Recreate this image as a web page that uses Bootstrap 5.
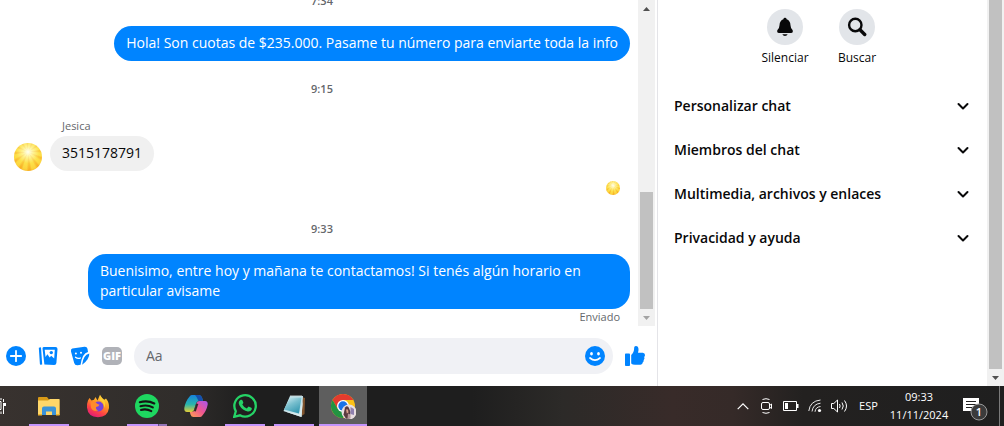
<!DOCTYPE html>
<html lang="es">
<head>
<meta charset="utf-8">
<meta name="viewport" content="width=device-width, initial-scale=1">
<title>Messenger</title>
<link href="https://cdn.jsdelivr.net/npm/bootstrap@5.3.0/dist/css/bootstrap.min.css" rel="stylesheet">
<style>
body{font-family:"Open Sans","Noto Sans",sans-serif;font-size:14px;line-height:20px;color:#080809;background:#fff}
button{background:none;border:0;padding:0;color:inherit;font:inherit}
svg{display:block;flex:none}
.side{flex:0 0 347px;border-left:1px solid #e4e4e8}
.thread{padding:0 8px 1px 14px}
.thread>*{flex-shrink:0}
.stamp{font-size:11px;font-weight:600;line-height:16px;color:#65676b;text-align:center;padding:20px 0 17px 0}
.meta{font-size:11px;line-height:16px;color:#65676b}
.sender{padding:0 12px 2px}
.bubble{border-radius:18px;padding:7px 12px 8px;max-width:88%}
.mine{background:#0084ff;color:#fff;align-self:flex-end}
.theirs{background:#f0f0f0;max-width:none}
.sun{border-radius:50%;width:28px;height:28px;background:radial-gradient(circle at 50% 32%,#fffff0 0,#fff8a8cc 22%,#fde14a99 48%,#fbc02a66 72%,#f59a1c 100%),repeating-conic-gradient(from 5deg at 50% 32%,#fde14a 0 12deg,#f7a823 18deg 22deg,#fde14a 30deg)}
.sun-sm{width:14px;height:14px;margin:10px 0 6px}
.tail{margin-right:10px}
.bar-v{width:17px;background:#f1f1f1;flex:none}
.inner{margin-right:2px}
.bar-v .arrow{height:17px;display:flex;align-items:center;justify-content:center}
.thumb{background:#c1c1c1;margin:0 2px}
.composer{gap:12px;padding:12px 12px 12px 6px;color:#0084ff}
.pill{background:#f0f1f5;border-radius:18px;height:36px;padding:0 8px 0 12px}
.pill input{background:none;border:0;outline:0;min-width:0;color:#080809}
.pill input::placeholder{color:#65676b;opacity:1}
.round{width:36px;height:36px;border-radius:50%;background:#e2e5e9}
.acts{padding:9px 3px 18px 0}
.act{width:72px;font-size:12px;line-height:16px;gap:5px}
.fold{height:44px;padding:0 18px 0 16px;font-weight:600;font-size:14px}
.taskbar{height:40px;gap:1px;color:#fff;font-size:11px;background:linear-gradient(90deg,#38322f 0,#302d2b 18%,#1e1e1e 25%,#1e1e1e 47%,#2c2a28 56%,#382b29 67%,#352a28 73%,#232120 80%,#1f1f1f 100%)}
.task{width:48px;height:40px;position:relative;display:flex;align-items:center;justify-content:center}
.cut{width:24px;justify-content:flex-start}
.open::after{content:"";position:absolute;left:4px;right:4px;bottom:0;height:2px;background:#c393fb}
.multi::after{background:linear-gradient(90deg,#c393fb 31px,#66507d 31px,#66507d 32px,#9475b8 32px)}
.active{background:#5e5e5e}
.active::after{left:0;right:0}
.tray{width:24px;display:flex;align-items:center;justify-content:center}
.lang{width:35px}
.clock{width:66px;line-height:18px;text-align:center}
.note{width:47px}
.desk{width:5px;border-left:1px solid #7a7a7a}
</style>
</head>
<body class="vh-100 d-flex flex-column overflow-hidden">
<div class="d-flex flex-grow-1 overflow-hidden">
  <main class="d-flex flex-column flex-grow-1 overflow-hidden">
    <div class="d-flex flex-grow-1 overflow-hidden">
      <section class="thread d-flex flex-column justify-content-end flex-grow-1">
        <div class="stamp">7:34</div>
        <div class="bubble mine">Hola! Son cuotas de $235.000. Pasame tu número para enviarte toda la info</div>
        <div class="stamp">9:15</div>
        <div class="d-flex align-items-end gap-2 mt-1">
          <span class="sun"></span>
          <div>
            <div class="meta sender">Jesica</div>
            <div class="bubble theirs">3515178791</div>
          </div>
        </div>
        <span class="sun sun-sm align-self-end tail"></span>
        <div class="stamp">9:33</div>
        <div class="bubble mine">Buenisimo, entre hoy y mañana te contactamos! Si tenés algún horario en particular avisame</div>
        <div class="meta text-end tail">Enviado</div>
      </section>
      <div class="bar-v inner d-flex flex-column">
        <span class="arrow"><svg width="7" height="4"><path d="M0 4 3.500 0 7 4z" fill="#505050"/></svg></span>
        <span class="flex-grow-1"></span>
        <span class="thumb" style="height:36%"></span>
        <span class="arrow"><svg width="7" height="4"><path d="M0 0 3.500 4 7 0z" fill="#a3a3a3"/></svg></span>
      </div>
    </div>
    <form class="composer d-flex align-items-center">
      <button type="button" aria-label="Más"><svg width="20" height="20"><circle cx="10" cy="10" r="10" fill="currentColor"/><path d="M10 4.800v10.400M4.800 10h10.400" stroke="#fff" stroke-width="1.800" stroke-linecap="round"/></svg></button>
      <button type="button" aria-label="Fotos"><svg width="20" height="20" fill="currentColor"><path d="M.8 1.800 3 1.300 4.200 18.500 2.500 18.800Q2 18.800 1.900 18zM5.700 1H17.500q2 .2 2 2L18.400 17q-.2 2.100-2.200 2.100L6.400 18.400 4.500 2.500Q4.400 1.200 5.700 1z"/><path d="M6.700 3.800H16.800L16.200 12.500l-3-2.700-1.500 1.700-2.300-3.200L7.500 11z" fill="#fff"/><circle cx="13.300" cy="6.600" r="1.700"/></svg></button>
      <button type="button" aria-label="Stickers"><svg width="20" height="20"><path d="M2.300 2.600 14.500.8q2.500-.2 3 2l.5 3.200q-5.800 1.200-7.400 12.800l-3 .5q-2.700.3-3.400-2.300L1 5.600Q.5 3.100 2.300 2.600z" fill="currentColor"/><path d="M19.300 7.500q.2 6-7.200 11.200Q13 9.300 19.300 7.500z" fill="currentColor"/><circle cx="5.900" cy="7.600" r="1" fill="#fff"/><circle cx="11" cy="6.800" r="1" fill="#fff"/><path d="M5.500 11.200q2.300 2 4.900.8" fill="none" stroke="#fff" stroke-width="1.300" stroke-linecap="round"/></svg></button>
      <button type="button" aria-label="GIF"><svg width="20" height="20"><rect y="1" width="20" height="18" rx="5" fill="#b0b2b8"/><text x="10" y="14" font-size="11" font-weight="800" text-anchor="middle" fill="#fff">GIF</text></svg></button>
      <div class="pill d-flex align-items-center flex-grow-1">
        <input class="flex-grow-1 p-0" type="text" placeholder="Aa" aria-label="Mensaje">
        <button type="button" aria-label="Emoji"><svg width="20" height="20"><circle cx="10" cy="10" r="10" fill="#0084ff"/><ellipse cx="6.500" cy="7.800" rx="1.400" ry="1.700" fill="#fff"/><ellipse cx="13.500" cy="7.800" rx="1.400" ry="1.700" fill="#fff"/><path d="M5 12q5 4.300 10 0" fill="none" stroke="#fff" stroke-width="1.700" stroke-linecap="round"/></svg></button>
      </div>
      <button type="button" aria-label="Me gusta"><svg width="20" height="20" fill="currentColor"><path d="M.8 7.600h3.400q.8 0 .8.800V19q0 .9-.8.900H.8Q0 19.900 0 19V8.400q0-.8.800-.8zM6.200 9q3-2.500 3-7.400Q9.200 0 10.800 0q3 0 2.700 4.300L13 6.800h4.800q2.200.2 2.200 2.200 0 1.200-.8 1.900.8 1.900-.5 3.200.2 1.800-1 2.500 0 2-2.200 2.200H10q-2.500 0-3.800-1.200z"/></svg></button>
    </form>
  </main>
  <aside class="side d-flex">
    <div class="flex-grow-1">
      <div class="acts d-flex justify-content-center">
        <button class="act d-flex flex-column align-items-center" type="button"><span class="round d-flex align-items-center justify-content-center"><svg width="20" height="20" fill="#080809"><path d="M10 .8q1.500 0 1.600 1.400 3.700 1.300 3.900 6 .1 2.600 1.700 4.300.8 1 .6 2.200-.2 1.300-1.900 1.300H4.100q-1.700 0-1.900-1.300-.2-1.200.6-2.200 1.600-1.700 1.700-4.300.2-4.700 3.900-6Q8.500.8 10 .8zM7.300 17.300h5.400q-.8 1.800-2.700 1.800t-2.700-1.800z"/></svg></span>Silenciar</button>
        <button class="act d-flex flex-column align-items-center" type="button"><span class="round d-flex align-items-center justify-content-center"><svg width="20" height="20" fill="none" stroke="#080809" stroke-linecap="round"><circle cx="8.300" cy="8" r="6.200" stroke-width="2.400"/><path d="m13 12.800 4.700 4.700" stroke-width="3.400"/></svg></span>Buscar</button>
      </div>
      <button class="fold w-100 d-flex align-items-center justify-content-between" type="button">Personalizar chat<svg width="12" height="8"><path d="m1.500 2 4.500 4.500L10.500 2" fill="none" stroke="#080809" stroke-width="2" stroke-linecap="round" stroke-linejoin="round"/></svg></button>
      <button class="fold w-100 d-flex align-items-center justify-content-between" type="button">Miembros del chat<svg width="12" height="8"><path d="m1.500 2 4.500 4.500L10.500 2" fill="none" stroke="#080809" stroke-width="2" stroke-linecap="round" stroke-linejoin="round"/></svg></button>
      <button class="fold w-100 d-flex align-items-center justify-content-between" type="button">Multimedia, archivos y enlaces<svg width="12" height="8"><path d="m1.500 2 4.500 4.500L10.500 2" fill="none" stroke="#080809" stroke-width="2" stroke-linecap="round" stroke-linejoin="round"/></svg></button>
      <button class="fold w-100 d-flex align-items-center justify-content-between" type="button">Privacidad y ayuda<svg width="12" height="8"><path d="m1.500 2 4.500 4.500L10.500 2" fill="none" stroke="#080809" stroke-width="2" stroke-linecap="round" stroke-linejoin="round"/></svg></button>
    </div>
    <div class="bar-v d-flex flex-column">
      <span class="thumb flex-grow-1"></span>
      <span class="arrow"><svg width="7" height="4"><path d="M0 0 3.500 4 7 0z" fill="#505050"/></svg></span>
    </div>
  </aside>
</div>
<footer class="taskbar d-flex flex-shrink-0">
  <button class="task cut" aria-label="Vista de tareas"><svg width="6" height="16"><path d="M0 3.500h1v8H0M3.500 1v3M3.500 6v10M1 0v2M1 13.500v2.500" fill="none" stroke="#fff"/><path d="M3 5h3v3H3z" fill="#fff"/></svg></button>
  <button class="task open" aria-label="Explorador"><svg width="22" height="20"><path d="M0 2q0-1 1-1h8l2 2.500h9.500q1 0 1 1V19H0z" fill="#d99a17"/><path d="M0 4.500h10L12 3h9.500v16H0z" fill="#ffd76a"/><path d="M4 19v-6.500q0-2 2-2h10q2 0 2 2V19h-4v-3.500H8V19z" fill="#3b93d8"/><path d="M0 18h4v1.500H0zM18 18h3.500v1.500H18z" fill="#f2b730"/></svg></button>
  <button class="task" aria-label="Firefox"><svg width="24" height="24"><defs><linearGradient id="ff" x1=".8" y1="0" x2=".3" y2="1"><stop offset="0" stop-color="#ffe33f"/><stop offset=".4" stop-color="#ff9a22"/><stop offset=".7" stop-color="#ff4543"/><stop offset="1" stop-color="#e2197a"/></linearGradient></defs><path d="M2 6.500 3.500 4l2 2.500 2.500-.7L9.500 3l2 3.500L14 .8q1.500 3.300 4.300 5L20 4.500q3.500 4.300 3 9.500-1.200 9-11 9.300Q1.800 22.800 1 13.500.8 9.500 2 6.500z" fill="url(#ff)"/><circle cx="12.500" cy="12.500" r="5" fill="#7542dc"/><path d="M4.500 8.500q4-2 7 1.500l2 .7q-.5 2-3.500 2.200-.5 2.600 2.500 3.400-5 2.200-7.500-2.500z" fill="#ff8b2b"/><path d="M13.500 6.500q5 1 4.500 7.500 2.500-5-.5-8.200L15 3z" fill="#ffcf35"/></svg></button>
  <button class="task open multi" aria-label="Spotify"><svg width="24" height="24"><circle cx="12" cy="12" r="12" fill="#1ed760"/><path d="M4.800 8.200q8-2.200 14.500 1.300M5.500 12.200q6.700-1.900 12.300 1.200M6 15.900q5.600-1.500 10.300 1.200" fill="none" stroke="#141414" stroke-width="2.100" stroke-linecap="round"/></svg></button>
  <button class="task" aria-label="Copilot"><svg width="24" height="24"><defs><linearGradient id="c1" x2="0" y2="1"><stop offset="0" stop-color="#1683dc"/><stop offset=".55" stop-color="#28b5ad"/><stop offset="1" stop-color="#e5ce36"/></linearGradient><linearGradient id="c2" x1="1" x2="0" y2="1"><stop offset="0" stop-color="#a855f0"/><stop offset=".5" stop-color="#f0568f"/><stop offset="1" stop-color="#ffa251"/></linearGradient></defs><path d="M6 2q.6-1 2-1h7q2.200 0 3 2.500L19 7h-4q-2.200 0-3 2.500L10 16q-.7 2-2.500 2H3q-3 0-2.700-4Q1.500 7 6 2z" fill="url(#c1)"/><path d="M18 22q-.6 1-2 1H9.500q-2.200 0-3-2.500L5.800 18h2q2 0 2.700-2.500L12.600 9q.8-2 3-2H21q3 0 2.700 3.500Q22.500 17 18 22z" fill="url(#c2)"/><path d="M11 1h4q2.200 0 3 2.500L19 7h-4.500q-1.700-4.500-3.500-6z" fill="#154fae"/><path d="m12.300 9.500 2 .5-2.500 7.500-2-.5z" fill="#302b2b"/></svg></button>
  <button class="task open" aria-label="WhatsApp"><svg width="24" height="24"><path d="m1.200 22.800 1.600-5.600A10.700 10.700 0 1 1 7 21.300z" fill="none" stroke="#25d366" stroke-width="2.300"/><path d="M7.600 5.800q1.400-.5 1.900.6l.8 2q.2.700-1 2 1.500 2.900 4.500 4l1.300-1.500q.4-.5 1-.2l2.200 1.100q.8.400.4 1.600-.9 2.400-3.900 2.100-5.200-.8-8.300-6-2-3.600 1.100-5.700z" fill="#25d366"/></svg></button>
  <button class="task open" aria-label="Bloc de notas"><svg width="24" height="24"><defs><linearGradient id="np" x2=".6" y2="1"><stop offset="0" stop-color="#d8f0f4"/><stop offset=".5" stop-color="#78bfce"/><stop offset="1" stop-color="#389ab2"/></linearGradient></defs><path d="m20 3 3 1-.5 16-3 2z" fill="#80542e"/><path d="M8 2h13l-1.500 21L1.500 17z" fill="#c5e3ea"/><path d="M8 3.500h11.500L17 19.500 2 15.500z" fill="url(#np)"/><path d="m1.500 17 18 6 1.300-16L17.200 20.200z" fill="#dcebed"/><path d="M8.500 1.800h12" stroke="#b9c2c4" stroke-width="1.600" stroke-dasharray="1 1"/></svg></button>
  <button class="task open active" aria-label="Chrome"><svg width="26" height="26" viewBox="-1 -1 26 26"><circle cx="12" cy="12" r="12" fill="#fbc116"/><path d="M1.600 6A12 12 0 0 1 22.400 6H12L6.800 15z" fill="#e33b2e"/><path d="M1.600 6A12 12 0 0 0 12 24l5.200-9H6.800z" fill="#229342"/><circle cx="12" cy="12" r="6" fill="#fff"/><circle cx="12" cy="12" r="4.700" fill="#1a73e8"/><circle cx="18" cy="18" r="7.500" fill="#e9dfe0"/><path d="M14 13.500q2.500-2.500 4 .5l1.500 4-1 6.500-3.500.2-2.500-4z" fill="#5b3a40"/><path d="M15 15.500h2l.5 3-1.700 1z" fill="#dba28c"/><path d="m19.500 13 3.500 2v6l-3.500-1z" fill="#8f80ae"/><path d="m17 19.500 2.500 1v4h-3z" fill="#b5979a"/></svg></button>
  <span class="flex-grow-1"></span>
  <div class="d-flex">
    <button class="tray" aria-label="Mostrar iconos ocultos"><svg width="12" height="7"><path d="M.7 6.200 6 .9l5.300 5.300" fill="none" stroke="#fff" stroke-width="1.200"/></svg></button>
    <button class="tray" aria-label="Cámara"><svg width="12" height="16" fill="none" stroke="#fff"><rect x=".5" y="4.500" width="8" height="7" rx="1.500"/><path d="m8.500 7.500 2-1.500v4.500l-2-1.500M1.500 1.500q3.500-1.600 7 0M1.500 14.500q3.500 1.600 7 0"/></svg></button>
    <button class="tray" aria-label="Batería"><svg width="16" height="10"><path d="M.5.500h13v9H.5z" fill="none" stroke="#fff"/><path d="M2 2h3v6H2zM14 3h1.500v4H14z" fill="#fff"/></svg></button>
    <button class="tray" aria-label="Red"><svg width="14" height="14" fill="none"><path d="M.8 12Q2 2 12.500 1M4 12.500Q5 5 12.500 4.200M7 12.800q.5-4.800 5.500-5.300" stroke="#e8e8e8"/><circle cx="11.500" cy="11.500" r="1.600" fill="#fff"/></svg></button>
    <button class="tray" aria-label="Volumen"><svg width="17" height="14" fill="none" stroke="#fff"><path d="M.5 4.500h2.300L6.500 1v12L2.800 9.500H.5zM8.500 5q1.200 2 0 4M11 3.500q2.500 3.500 0 7M13.500 1.500q4 5.500 0 11"/></svg></button>
    <button class="lang">ESP</button>
    <button class="clock">09:33<br>11/11/2024</button>
    <button class="note d-flex align-items-center justify-content-center" aria-label="1 notificación"><svg width="26" height="30" viewBox="1 -4 26 30"><path d="M1 3h16v13h-4v3l-3.500-3H1z" fill="#fff"/><path d="M4 6.500h10M4 9.500h10M4 12.500h6" stroke="#222"/><circle cx="17" cy="17" r="8" fill="#3b3b3b" stroke="#999"/><text x="17" y="21" text-anchor="middle" font-size="11" font-weight="600" fill="#fff">1</text></svg></button>
    <span class="desk"></span>
  </div>
</footer>
<script src="https://cdn.jsdelivr.net/npm/bootstrap@5.3.0/dist/js/bootstrap.bundle.min.js"></script>
</body>
</html>
